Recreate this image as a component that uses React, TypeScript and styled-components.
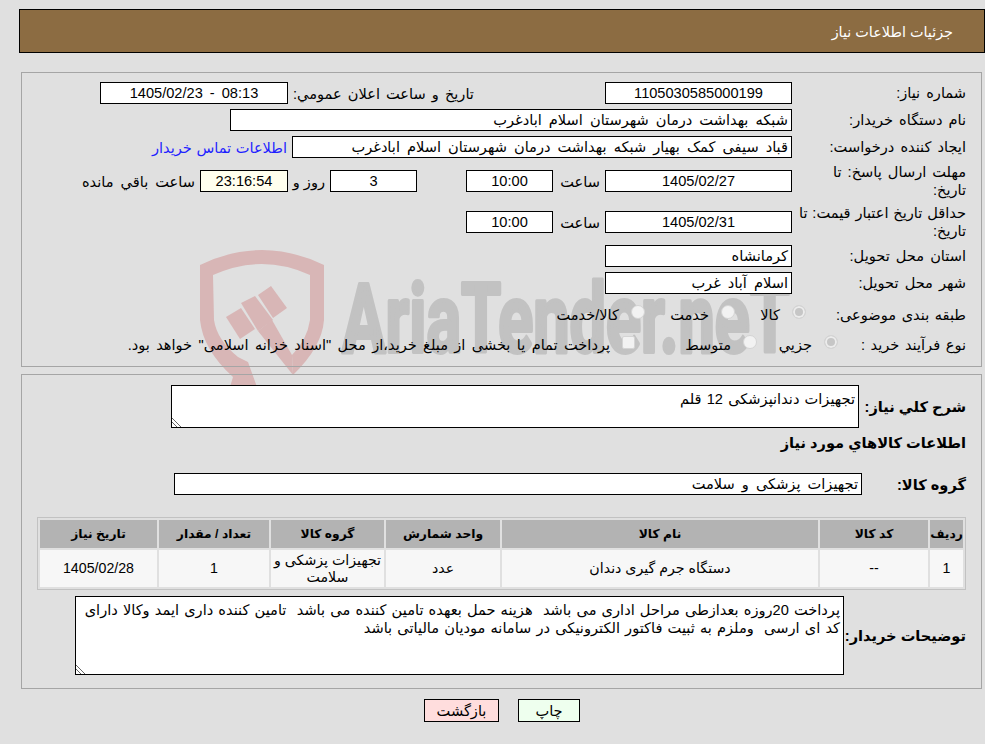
import React from 'react';
import styled, { createGlobalStyle } from 'styled-components';

const GlobalStyle = createGlobalStyle`
  html, body {
    margin: 0;
    padding: 0;
    background: #e0e0e0;
  }

  body {
    font-family: "Liberation Sans", "DejaVu Sans", sans-serif;
    font-size: 14.6px;
    word-spacing: 3px;
    color: #000;
  }
`

export default function App() {
  return (
    <Page dir="rtl">
      <GlobalStyle />
      <Watermark />

      <Header>جزئیات اطلاعات نیاز</Header>

      <Panel $top={19} $pad={9} $bottom={12}>
        <Row>
          <Label>شماره نیاز:</Label>
          <Field $width={187}>1105030585000199</Field>
          <PublishLabel>تاریخ و ساعت اعلان عمومي:</PublishLabel>
          <Field $width={188}>08:13 - 1405/02/23</Field>
        </Row>
        <Row>
          <Label>نام دستگاه خریدار:</Label>
          <Field $width={562} $start>شبکه بهداشت درمان شهرستان اسلام ابادغرب</Field>
        </Row>
        <Row>
          <Label>ایجاد کننده درخواست:</Label>
          <Field $width={500} $start>قباد سیفی کمک بهیار شبکه بهداشت درمان شهرستان اسلام ابادغرب</Field>
          <ContactLink>اطلاعات تماس خریدار</ContactLink>
        </Row>
        <TallRow>
          <Label>مهلت ارسال پاسخ: تا<br />تاریخ:</Label>
          <Field $width={187}>1405/02/27</Field>
          <Caption $width={42}>ساعت</Caption>
          <Field $width={87}>10:00</Field>
          <Field $width={87} $gap={44}>3</Field>
          <Caption $width={32} $tight>روز و</Caption>
          <Field $width={88} $bg="#ffffee">23:16:54</Field>
          <Caption>ساعت باقي مانده</Caption>
        </TallRow>
        <TallRow>
          <NarrowLabel>حداقل تاریخ اعتبار قیمت: تا<br />تاریخ:</NarrowLabel>
          <Field $width={187}>1405/02/31</Field>
          <Caption $width={42}>ساعت</Caption>
          <Field $width={87}>10:00</Field>
        </TallRow>
        <Row>
          <Label>استان محل تحویل:</Label>
          <Field $width={187} $start>کرمانشاه</Field>
        </Row>
        <Row>
          <Label>شهر محل تحویل:</Label>
          <Field $width={187} $start>اسلام آباد غرب</Field>
        </Row>
        <OptionRow $height={30}>
          <OptionLabel $width={160}>طبقه بندی موضوعی:</OptionLabel>
          <Option $width={71}><Radio checked />کالا</Option>
          <Option $width={90}><Radio />خدمت</Option>
          <Option><Radio />کالا/خدمت</Option>
        </OptionRow>
        <OptionRow $height={20}>
          <OptionLabel $width={128}>نوع فرآیند خرید :</OptionLabel>
          <Option $width={81}><Radio checked />جزيي</Option>
          <Option $width={122}><Radio />متوسط</Option>
          <Option><Check />پرداخت تمام یا بخشی از مبلغ خرید،از محل "اسناد خزانه اسلامی" خواهد بود.</Option>
        </OptionRow>
      </Panel>

      <Panel $top={7} $pad={10} $bottom={13}>
        <Row>
          <StrongLabel $width={107}>شرح کلي نیاز:</StrongLabel>
          <TextBox $width={688} $height={43} readOnly defaultValue="تجهیزات دندانپزشکی 12 قلم" />
        </Row>
        <SectionTitle>اطلاعات کالاهاي مورد نیاز</SectionTitle>
        <GroupRow>
          <StrongLabel $width={104}>گروه کالا:</StrongLabel>
          <Field $width={688} $start>تجهیزات پزشکی و سلامت</Field>
        </GroupRow>

        <ItemsTable>
          <colgroup>
            <col width={33} />
            <col width={108} />
            <col width={316} />
            <col width={114} />
            <col width={113} />
            <col width={110} />
            <col width={117} />
          </colgroup>
          <thead>
            <tr>
              <th>ردیف</th>
              <th>کد کالا</th>
              <th>نام کالا</th>
              <th>واحد شمارش</th>
              <th>گروه کالا</th>
              <th>تعداد / مقدار</th>
              <th>تاریخ نیاز</th>
            </tr>
          </thead>
          <tbody>
            <tr>
              <td>1</td>
              <td>--</td>
              <td>دستگاه جرم گیری دندان</td>
              <td>عدد</td>
              <td>تجهیزات پزشکی و سلامت</td>
              <td>1</td>
              <td>1405/02/28</td>
            </tr>
          </tbody>
        </ItemsTable>

        <NotesRow>
          <StrongLabel $width={122}>توضیحات خریدار:</StrongLabel>
          <TextBox
            $width={769}
            $height={79}
            readOnly
            defaultValue="پرداخت 20روزه بعدازطی مراحل اداری می باشد  هزینه حمل بعهده تامین کننده می باشد  تامین کننده داری ایمد وکالا دارای کد ای ارسی  وملزم به ثبیت فاکتور الکترونیکی در سامانه مودیان مالیاتی باشد"
          />
        </NotesRow>
      </Panel>

      <Actions>
        <ActionButton $width={62} $bg="#eeffee">چاپ</ActionButton>
        <ActionButton $width={75} $bg="#ffdddd">بازگشت</ActionButton>
      </Actions>
    </Page>
  );
}

function Watermark() {
  return (
    <WatermarkLayer viewBox="0 0 985 744" aria-hidden="true">
      <g fill="#d8b6b6">
        <path d="M200 265 Q262 235 324 265 L324 320 Q322 347 293 375 L292 355 Q307 340 310 320 L310 275 Q262 253 213 275 L214 320 Q217 340 238 357 L248 362 L257 387 L230 387 L233 377 Q203 350 200 320 Z" />
        <path d="M226 317 L241 308 L255 329 L240 339 Z" />
        <path d="M241 303 L255 296 L273 320 L258 331 Z" />
        <path d="M258 295 L271 286 L287 308 L273 318 Z" />
        <path d="M258 331 L272 320 L292 355 L293 375 Z" />
      </g>
      <text
        x="342"
        y="352"
        fill="#c2c2c2"
        stroke="#c2c2c2"
        strokeWidth="4"
        strokeLinejoin="round"
        fontFamily="Roboto, sans-serif"
        fontWeight="700"
        fontSize="97"
        textLength="448"
        lengthAdjust="spacingAndGlyphs"
        direction="ltr"
      >
        AriaTender.neT
      </text>
    </WatermarkLayer>
  )
}

const Page = styled.div`
  position: relative;
  width: 985px;
  height: 744px;
  overflow: hidden;
  padding-top: 9px;
  box-sizing: border-box;
`

const WatermarkLayer = styled.svg`
  position: absolute;
  top: 0;
  left: 0;
  width: 985px;
  height: 744px;
`

const Header = styled.div`
  position: relative;
  display: flex;
  align-items: center;
  height: 44px;
  box-sizing: border-box;
  margin-left: 19px;
  padding: 2px 31px 0 0;
  background: #8c6c42;
  border: 1px solid #000;
  color: #fff;
  font-size: 14.4px;
  word-spacing: 0;
`

const Panel = styled.div<{ $top: number; $pad: number; $bottom: number }>`
  position: relative;
  display: flex;
  flex-direction: column;
  gap: 5px;
  width: 961px;
  box-sizing: border-box;
  margin: ${p => p.$top}px 3px 0 0;
  padding: ${p => p.$pad}px 15px ${p => p.$bottom}px 15px;
  border: 1px solid #a5a5a5;
`

const Row = styled.div`
  display: flex;
  align-items: center;
  gap: 5px;
  min-height: 22px;
`

const TallRow = styled(Row)`
  height: 36px;
`

const GroupRow = styled(Row)`
  margin-top: 15px;
`

const OptionRow = styled.div<{ $height: number }>`
  display: flex;
  align-items: center;
  height: ${p => p.$height}px;
`

const Label = styled.div`
  width: 174px;
  margin-left: -5px;
  flex-shrink: 0;
  line-height: 18px;
  white-space: nowrap;
  word-spacing: 2px;
`

const NarrowLabel = styled(Label)`
  word-spacing: 0.8px;
`

const OptionLabel = styled.div<{ $width: number }>`
  width: ${p => p.$width}px;
  flex-shrink: 0;
  word-spacing: 1.5px;
`

const StrongLabel = styled.div<{ $width: number }>`
  width: ${p => p.$width}px;
  flex-shrink: 0;
  margin-left: -5px;
  font-weight: bold;
  word-spacing: 0;
`

const PublishLabel = styled.div`
  width: 307px;
  text-align: left;
  word-spacing: 2px;
`

const Field = styled.div<{ $width: number; $start?: boolean; $bg?: string; $gap?: number }>`
  width: ${p => p.$width}px;
  height: 22px;
  flex-shrink: 0;
  box-sizing: border-box;
  margin-right: ${p => p.$gap ?? 0}px;
  padding: 0 3px;
  background: ${p => p.$bg ?? '#fff'};
  border: 1px solid #000;
  line-height: 20px;
  text-align: ${p => (p.$start ? 'right' : 'center')};
  white-space: nowrap;
  overflow: hidden;
`

const Caption = styled.div<{ $width?: number; $tight?: boolean }>`
  ${p => (p.$width ? `width: ${p.$width}px;` : '')}
  ${p => (p.$tight ? 'word-spacing: 0;' : '')}
  flex-shrink: 0;
  white-space: nowrap;
`

const ContactLink = styled.a`
  color: #1f1fff;
  white-space: nowrap;
  word-spacing: 0.5px;
`

const Option = styled.label<{ $width?: number }>`
  display: flex;
  align-items: center;
  gap: 12px;
  ${p => (p.$width ? `width: ${p.$width}px;` : '')}
  flex-shrink: 0;
  white-space: nowrap;
  word-spacing: 2.3px;
`

const Radio = styled.input.attrs({ type: 'radio', disabled: true, readOnly: true })`
  appearance: none;
  width: 14px;
  height: 14px;
  margin: -5px 0 0 0;
  flex-shrink: 0;
  border-radius: 50%;
  background: ${p => (p.checked ? '#c6c6c6' : '#f2f2f2')};
  border: 1px solid #d4d4d4;
  box-shadow: ${p => (p.checked ? 'inset 0 0 0 2px #ececec' : 'none')};
`

const Check = styled.input.attrs({ type: 'checkbox', disabled: true })`
  appearance: none;
  width: 13px;
  height: 13px;
  margin: -4px 0 0 0;
  flex-shrink: 0;
  border-radius: 2px;
  background: #f2f2f2;
  border: 1px solid #d4d4d4;
`

const TextBox = styled.textarea<{ $width: number; $height: number }>`
  display: block;
  width: ${p => p.$width}px;
  height: ${p => p.$height}px;
  flex-shrink: 0;
  box-sizing: border-box;
  margin: 0;
  padding: 4px 3px 2px 1px;
  background: #fff;
  border: 1px solid #000;
  border-radius: 0;
  outline: none;
  overflow: hidden;
  font-family: inherit;
  font-size: inherit;
  line-height: 18px;
  word-spacing: 1.1px;
  color: #000;

  &::-webkit-resizer {
    background: linear-gradient(
      45deg,
      transparent 3px,
      #666 3px,
      #666 4px,
      transparent 4px,
      transparent 6px,
      #666 6px,
      #666 7px,
      transparent 7px
    );
  }
`

const SectionTitle = styled.div`
  height: 20px;
  font-weight: bold;
  line-height: 20px;
  word-spacing: 0;
`

const ItemsTable = styled.table`
  width: 928px;
  margin-top: 17px;
  table-layout: fixed;
  border: 1px solid #c2c2c2;
  border-spacing: 2px;
  font-size: 12.3px;
  word-spacing: 0;

  th {
    height: 28px;
    padding: 0;
    background: #b3b3b3;
    font-weight: bold;
  }

  td {
    height: 37px;
    padding: 0 2px;
    background: #f7f7f7;
    text-align: center;
    font-size: 14.2px;
    line-height: 17px;
  }
`

const NotesRow = styled(Row)`
  margin-top: 1px;
`

const Actions = styled.div`
  position: relative;
  display: flex;
  justify-content: center;
  gap: 19px;
  margin-top: 10px;
  padding-left: 19px;
`

const ActionButton = styled.button<{ $width: number; $bg: string }>`
  width: ${p => p.$width}px;
  height: 23px;
  padding: 0;
  background: ${p => p.$bg};
  border: 1px solid #000;
  border-radius: 0;
  font-family: inherit;
  font-size: inherit;
  color: #000;
`
